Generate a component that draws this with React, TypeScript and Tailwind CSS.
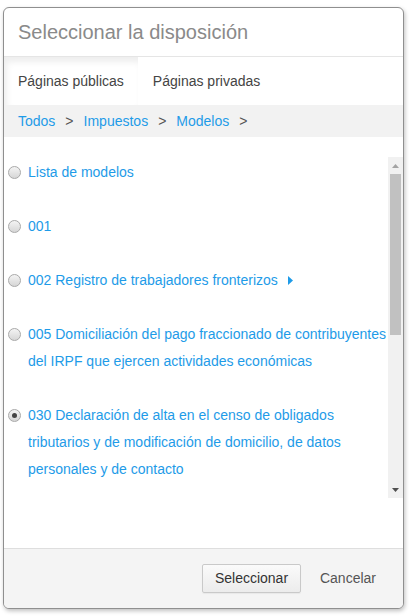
import React from "react";

const blue = "text-[#1e9be8]";

function Radio({ checked = false }: { checked?: boolean }) {
  return (
    <span className="mt-[7px] flex h-[13px] w-[13px] shrink-0 items-center justify-center rounded-full border border-[#a9a9a9] bg-[linear-gradient(#f4f4f4,#d6d6d6)]">
      {checked && <span className="h-[5px] w-[5px] rounded-full bg-[#444]" />}
    </span>
  );
}

function Item({ children, checked }: { children: React.ReactNode; checked?: boolean }) {
  return (
    <div className="flex gap-[7px] pb-[27px]">
      <Radio checked={checked} />
      <div className={`${blue} text-[14px] leading-[27px]`}>{children}</div>
    </div>
  );
}

export default function App() {
  return (
    <div className="h-[616px] w-[409px] bg-white pl-[3px] pt-[7px] font-['Liberation_Sans',Arial,sans-serif]">
      <div className="flex h-[602px] w-[401px] flex-col overflow-hidden rounded-[6px] border border-[#8f8f8f] bg-white shadow-[1px_2px_4px_rgba(0,0,0,0.25)]">
        <div className="flex h-[49px] shrink-0 items-center border-b border-[#e5e5e5] pl-[14px] text-[20px] text-[#8a8a8a]">
          Seleccionar la disposición
        </div>
        <div className="flex h-[48px] shrink-0 text-[14px] text-[#444]">
          <div className="flex items-center bg-white px-[14px] shadow-[inset_3px_5px_6px_rgba(0,0,0,0.07)]">
            Páginas públicas
          </div>
          <div className="flex items-center px-[15px]">Páginas privadas</div>
        </div>
        <div className="flex h-[32px] shrink-0 items-center bg-[#f2f2f2] pl-[14px] text-[14px]">
          <span className={blue}>Todos</span>
          <span className="mx-[10px] text-[#555]">&gt;</span>
          <span className={blue}>Impuestos</span>
          <span className="mx-[10px] text-[#555]">&gt;</span>
          <span className={blue}>Modelos</span>
          <span className="mx-[10px] text-[#555]">&gt;</span>
        </div>
        <div className="flex h-[411px] shrink-0 flex-col pt-[20px]">
          <div className="flex h-[341px]">
            <div className="flex-1 overflow-hidden pl-[4px] pr-[2px] pt-[2px]">
              <Item>Lista de modelos</Item>
              <Item>001</Item>
              <Item>
                <span className="inline-flex items-center">
                  002 Registro de trabajadores fronterizos
                  <svg width="5" height="9" viewBox="0 0 5 9" className="ml-[10px]">
                    <path d="M0 0 L5 4.5 L0 9 Z" fill="#1e9be8" />
                  </svg>
                </span>
              </Item>
              <Item>
                005 Domiciliación del pago fraccionado de contribuyentes del IRPF que ejercen actividades económicas
              </Item>
              <Item checked>
                030 Declaración de alta en el censo de obligados tributarios y de modificación de domicilio, de datos personales y de contacto
              </Item>
            </div>
            <div className="flex w-[15px] shrink-0 flex-col bg-[#f1f1f1]">
              <div className="flex h-[17px] items-center justify-center">
                <svg width="7" height="4" viewBox="0 0 7 4">
                  <path d="M0 4 L3.5 0 L7 4 Z" fill="#a3a3a3" />
                </svg>
              </div>
              <div className="mx-[2px] h-[161px] bg-[#c1c1c1]" />
              <div className="flex-1" />
              <div className="flex h-[17px] items-center justify-center">
                <svg width="7" height="4" viewBox="0 0 7 4">
                  <path d="M0 0 L3.5 4 L7 0 Z" fill="#505050" />
                </svg>
              </div>
            </div>
          </div>
        </div>
        <div className="flex flex-1 items-center justify-end border-t border-[#dedede] bg-[#f4f4f4] pr-[27px]">
          <button className="h-[29px] w-[99px] rounded-[2px] border border-[#c9c9c9] bg-[linear-gradient(#fafafa,#ececec)] text-[14px] text-[#333] shadow-[0_1px_1px_rgba(0,0,0,0.05)]">
            Seleccionar
          </button>
          <span className="ml-[19px] text-[14px] text-[#555]">Cancelar</span>
        </div>
      </div>
    </div>
  );
}
